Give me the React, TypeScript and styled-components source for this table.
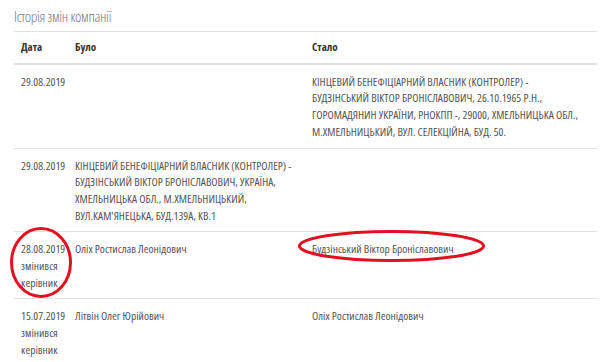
import React from "react";
import styled, { createGlobalStyle } from "styled-components";

const Global = createGlobalStyle`
  html, body { margin: 0; padding: 0; background: #fff; }
  body { font-family: "Open Sans", sans-serif; font-stretch: 84%; }
`;

const Page = styled.div`
  position: relative;
  padding: 0 5px 0 14px;
  width: 602px;
  height: 362px;
  box-sizing: border-box;
  overflow: hidden;
`;

const Title = styled.h2`
  margin: 0;
  padding: 5px 0 4px;
  font-size: 15px;
  line-height: 22px;
  font-weight: 300;
  font-stretch: 75%;
  letter-spacing: -0.3px;
  color: #777;
  border-bottom: 1px solid #e2e2e2;
`;

const Table = styled.table`
  width: 100%;
  border-collapse: collapse;
  table-layout: fixed;
  font-size: 11.5px;
  line-height: 16.7px;
  color: #555;
`;

const Th = styled.th<{ $w?: number }>`
  width: ${(p) => (p.$w ? `${p.$w}px` : "auto")};
  text-align: left;
  font-weight: 700;
  font-size: 11px;
  color: #333;
  padding: 7px 7px;
  border-bottom: 2px solid #e2e2e2;
`;

const Td = styled.td`
  vertical-align: top;
  padding: 9px 7px 7px;
  border-top: 1px solid #e2e2e2;
  white-space: pre-line;
`;

const DateText = styled.span`
  display: block;
  white-space: nowrap;
`;

const Ring = styled.svg`
  position: absolute;
  left: 0;
  top: 0;
  pointer-events: none;
`;

const rows = [
  {
    date: "29.08.2019",
    note: "",
    was: "",
    now: [
      "КІНЦЕВИЙ БЕНЕФІЦІАРНИЙ ВЛАСНИК (КОНТРОЛЕР) -",
      "БУДЗІНСЬКИЙ ВІКТОР БРОНІСЛАВОВИЧ, 26.10.1965 Р.Н.,",
      "ГОРОМАДЯНИН УКРАЇНИ, РНОКПП -, 29000, ХМЕЛЬНИЦЬКА ОБЛ.,",
      "М.ХМЕЛЬНИЦЬКИЙ, ВУЛ. СЕЛЕКЦІЙНА, БУД. 50.",
    ].join("\n"),
  },
  {
    date: "29.08.2019",
    note: "",
    was: [
      "КІНЦЕВИЙ БЕНЕФІЦІАРНИЙ ВЛАСНИК (КОНТРОЛЕР) -",
      "БУДЗІНСЬКИЙ ВІКТОР БРОНІСЛАВОВИЧ, УКРАЇНА,",
      "ХМЕЛЬНИЦЬКА ОБЛ., М.ХМЕЛЬНИЦЬКИЙ,",
      "ВУЛ.КАМ'ЯНЕЦЬКА, БУД.139А, КВ.1",
    ].join("\n"),
    now: "",
  },
  {
    date: "28.08.2019",
    note: "змінився\nкерівник",
    was: "Оліх Ростислав Леонідович",
    now: "Будзінський Віктор Броніславович",
  },
  {
    date: "15.07.2019",
    note: "змінився\nкерівник",
    was: "Літвін Олег Юрійович",
    now: "Оліх Ростислав Леонідович",
  },
];

export default function App() {
  return (
    <>
      <Global />
      <Page>
        <Title>Історія змін компанії</Title>
        <Table>
          <thead>
            <tr>
              <Th $w={40}>Дата</Th>
              <Th $w={223}>Було</Th>
              <Th>Стало</Th>
            </tr>
          </thead>
          <tbody>
            {rows.map((r, i) => (
              <tr key={i}>
                <Td>
                  <DateText>{r.date}</DateText>
                  {r.note}
                </Td>
                <Td>{r.was}</Td>
                <Td>{r.now}</Td>
              </tr>
            ))}
          </tbody>
        </Table>
        <Ring width="602" height="362" viewBox="0 0 602 362">
          <ellipse cx="41" cy="262.5" rx="29.5" ry="34" fill="none" stroke="#e3101f" strokeWidth="3" />
          <ellipse cx="391.5" cy="246" rx="92" ry="14.5" fill="none" stroke="#e3101f" strokeWidth="3" />
        </Ring>
      </Page>
    </>
  );
}
